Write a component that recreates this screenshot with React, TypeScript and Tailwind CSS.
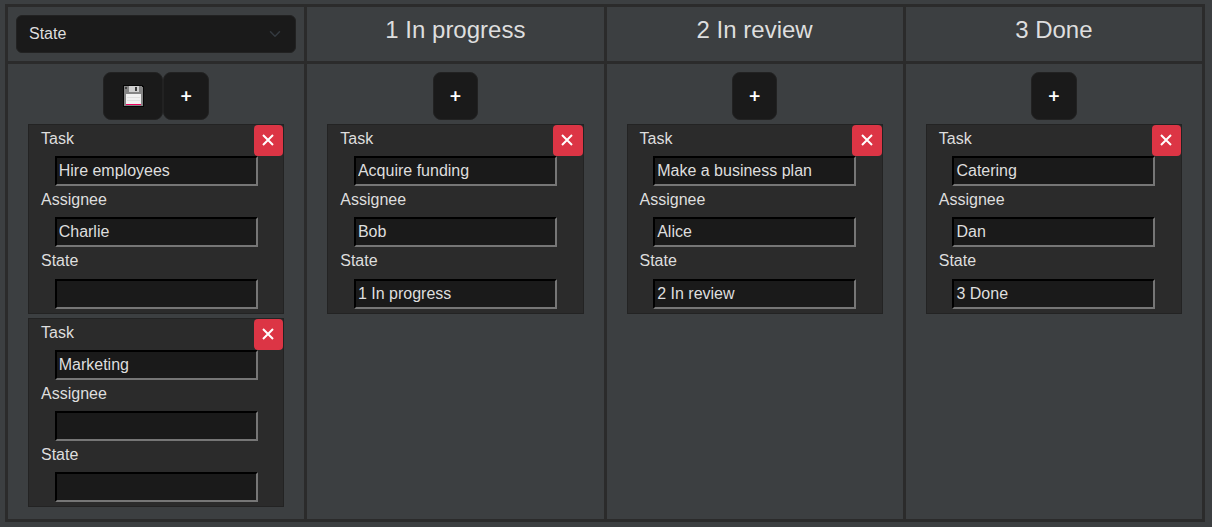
import React from "react";

type Item = { task: string; assignee: string; state: string };
type Column = { title: string; items: Item[] };

const columns: Column[] = [
  {
    title: "",
    items: [
      { task: "Hire employees", assignee: "Charlie", state: "" },
      { task: "Marketing", assignee: "", state: "" },
    ],
  },
  { title: "1 In progress", items: [{ task: "Acquire funding", assignee: "Bob", state: "1 In progress" }] },
  { title: "2 In review", items: [{ task: "Make a business plan", assignee: "Alice", state: "2 In review" }] },
  { title: "3 Done", items: [{ task: "Catering", assignee: "Dan", state: "3 Done" }] },
];

function FloppyIcon() {
  return (
    <svg width="22" height="22" viewBox="0 0 22 22" className="block" shapeRendering="crispEdges">
      <path d="M1 0H20L22 2V22H1Z" fill="#050505" />
      <path d="M2 1H19L21 3V21H2Z" fill="#858585" />
      <path d="M3 2H5V4H3Z" fill="#444" />
      <path d="M7 1H17V7H7Z" fill="#cfcfcf" />
      <path d="M13 2H15V6H13Z" fill="#3c3c3c" />
      <path d="M4 9H19V20H4Z" fill="#f1f1f1" />
      <path d="M5 12.500H18M5 15.500H18" stroke="#e0e0e0" />
      <path d="M4 19H19V20H4Z" fill="#f0005f" />
    </svg>
  );
}

function AddButton() {
  return (
    <button
      aria-label="Add"
      className="flex h-12 w-[45.6px] items-center justify-center rounded-lg border border-[#222] bg-[#1a1a1a] pb-[3px] font-['Inter',sans-serif] text-[20px] leading-6 font-medium text-white"
    >
      +
    </button>
  );
}

function Field({ label, value }: { label: string; value: string }) {
  return (
    <div className="h-[61.2px]">
      <div className="h-[31.2px] pl-3 pt-[1.95px] leading-6">{label}</div>
      <input
        readOnly
        value={value}
        className="ml-[25.7px] block h-[30px] w-[203px] border-2 border-t-black border-r-[#767676] border-b-[#767676] border-l-black bg-[#1a1a1a] px-0.5 py-px leading-6 outline-none"
      />
    </div>
  );
}

function Card({ item }: { item: Item }) {
  return (
    <div className="relative h-[189.6px] w-[256.25px] border border-[#232323] bg-[#2b2b2b]">
      <button
        aria-label="Delete"
        className="absolute right-0 top-0 flex h-[31px] w-[29.5px] items-center justify-center rounded bg-[#dc3545] pr-px pb-px"
      >
        <svg width="12" height="12" viewBox="0 0 12 12" fill="none" stroke="white" strokeWidth="2">
          <path d="M1 1L11 11M11 1L1 11" />
        </svg>
      </button>
      <Field label="Task" value={item.task} />
      <Field label="Assignee" value={item.assignee} />
      <Field label="State" value={item.state} />
    </div>
  );
}

export default function App() {
  return (
    <div className="h-[527px] w-[1212px] overflow-hidden bg-[#3c3f41] pl-[5px] pt-1 font-['Liberation_Sans',Arial,sans-serif] text-base text-[#dedede]">
      <div className="grid h-[518px] w-[1200px] grid-cols-4 grid-rows-[54px_455px] gap-[3px] border-[3px] border-[#2b2b2b] bg-[#2b2b2b]">
        {columns.map((column, index) => (
          <div key={index} className="bg-[#3c3f41] p-2">
            {index === 0 ? (
              <div className="flex h-[38px] items-center justify-between rounded-md border border-[#222] bg-[#1a1a1a] pl-3 pr-3">
                <span className="leading-6">State</span>
                <svg width="16" height="12" viewBox="0 0 16 16" fill="none" stroke="#343a40" strokeWidth="2" strokeLinecap="round" strokeLinejoin="round">
                  <path d="m2 5 6 6 6-6" />
                </svg>
              </div>
            ) : (
              <h2 className="text-center text-2xl leading-[29px]">{column.title}</h2>
            )}
          </div>
        ))}
        {columns.map((column, index) => (
          <div key={index} className="flex flex-col items-center bg-[#3c3f41] pt-2">
            <div className="flex h-[52px] items-start">
              {index === 0 && (
                <button
                  aria-label="Save"
                  className="flex h-12 w-[60px] items-center justify-center rounded-lg border border-[#222] bg-[#1a1a1a]"
                >
                  <FloppyIcon />
                </button>
              )}
              <AddButton />
            </div>
            <div className="flex flex-col gap-1">
              {column.items.map((item) => (
                <Card key={item.task} item={item} />
              ))}
            </div>
          </div>
        ))}
      </div>
    </div>
  );
}
